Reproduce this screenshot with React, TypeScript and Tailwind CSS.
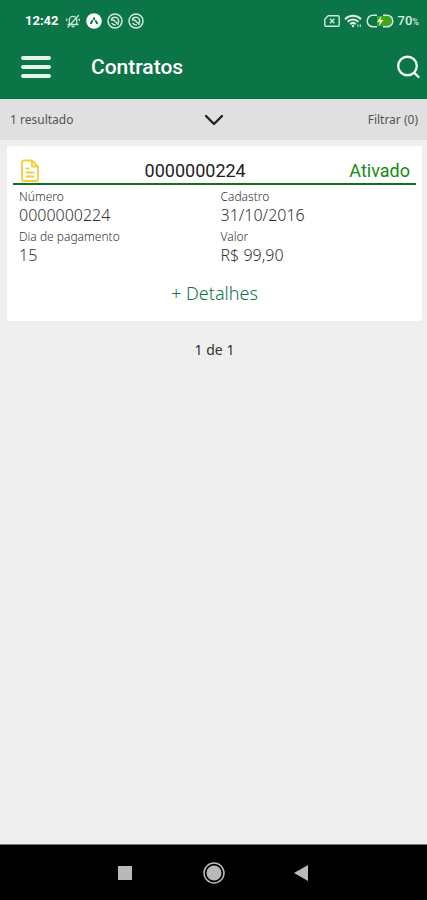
import React from 'react';

const fields = [
  { label: 'Número', value: '0000000224' },
  { label: 'Cadastro', value: '31/10/2016' },
  { label: 'Dia de pagamento', value: '15' },
  { label: 'Valor', value: 'R$ 99,90' },
];

function MutedBellIcon() {
  return (
    <svg className="w-4 h-4" viewBox="0 0 16 16" fill="none" stroke="#c9e6d6" strokeWidth="1.3" strokeLinecap="round">
      <path d="M3 11.5h10M4.3 11V7a3.7 3.7 0 0 1 7.4 0v4M7 13.5h2M3 14 13.5 2.500M2 6l-.5 1.500M14 6l.5 1.500" />
    </svg>
  );
}

function AppBadgeIcon() {
  return (
    <svg className="w-4 h-4" viewBox="0 0 16 16">
      <circle cx="8" cy="8" r="7.8" fill="#fff" />
      <path d="M8 5.200v1M6.200 8 5 10.300M9.800 8l1.200 2.300" fill="none" stroke="#0c7548" strokeWidth="2" strokeLinecap="round" />
    </svg>
  );
}

function SyncBadgeIcon() {
  return (
    <svg className="w-4 h-4" viewBox="0 0 16 16" fill="none" stroke="#cfe9db" strokeLinecap="round">
      <circle cx="8" cy="8" r="7" strokeWidth="1.5" />
      <path d="M4.500 6C6 3.800 9.500 3.600 11 5.800c1 1.400.8 3 .2 4.200M4.500 7l2.500.200 4 4M5 10.300c.8 1.200 2 1.700 3.300 1.700" strokeWidth="1.5" />
    </svg>
  );
}

function SimIcon() {
  return (
    <svg className="w-4 h-3" viewBox="0 0 16 12" fill="none" stroke="#cfe9db" strokeWidth="1.4">
      <path d="M4.2.8H14q1.200 0 1.200 1.200v8q0 1.200-1.200 1.200H2Q.8 11.200.8 10V4.200z" />
      <path d="m6 3.800 4.400 4.400M10.400 3.800 6 8.200" />
    </svg>
  );
}

function WifiIcon() {
  return (
    <svg className="w-[18px] h-[14px]" viewBox="0 0 18 14" fill="none" stroke="#d9efe3" strokeWidth="2">
      <path d="M1 5.200C5.500.700 12.500.700 17 5.200M3.600 7.800c3-3 7.800-3 10.800 0M6.200 10.200c1.600-1.500 4-1.500 5.600 0" />
      <circle cx="9" cy="12" r="1.200" fill="#d9efe3" stroke="none" />
      <path d="M14 10.500v2.500M16.300 10.500v2.500" strokeWidth="1" />
    </svg>
  );
}

function BatteryIcon() {
  return (
    <svg className="w-7 h-[14px]" viewBox="0 0 28 14">
      <path d="M11 2h10a5 5 0 0 1 0 10H11z" fill="#3fa51a" />
      <path d="M11 1.200H7a5.800 5.800 0 0 0 0 11.600h4M17 1.200h4a5.800 5.800 0 0 1 0 11.600h-4" fill="none" stroke="#cfe9db" strokeWidth="1.500" />
      <path d="M15.500 2 11 7.700h3L12.800 12l4.700-6h-3.100z" fill="#fff" />
    </svg>
  );
}

export default function App() {
  return (
    <div className="min-h-screen flex flex-col bg-[#eeeeee] font-['Noto_Sans',sans-serif] text-[#555555]">
      <header className="bg-[#0c7548] text-white font-[Roboto,sans-serif] border-b border-[#087044]">
        <div className="h-[42px] flex items-center pl-[25px] pr-2">
          <span className="text-[13px] font-bold">12:42</span>
          <div className="flex items-center gap-[5px] ml-[6px]">
            <MutedBellIcon />
            <AppBadgeIcon />
            <SyncBadgeIcon />
            <SyncBadgeIcon />
          </div>
          <div className="flex items-center gap-1 ml-auto">
            <SimIcon />
            <WifiIcon />
            <BatteryIcon />
            <span className="text-[13px] font-medium text-[#d9efe3]">70<small className="text-[9px]">%</small></span>
          </div>
        </div>
        <div className="h-14 flex items-start pl-5 pr-[5px]">
          <button type="button" aria-label="Menu" className="w-8 h-[50px] flex items-center justify-center">
            <svg className="w-8 h-6" viewBox="0 0 32 24" stroke="#e4f3eb" strokeWidth="4" strokeLinecap="round">
              <path d="M3 3h26M3 12h26M3 21h26" />
            </svg>
          </button>
          <h1 className="ml-[39px] text-[21px] leading-[50px] font-medium">Contratos</h1>
          <button type="button" aria-label="Buscar" className="ml-auto w-7 h-[50px] flex items-center justify-center">
            <svg className="w-7 h-7" viewBox="0 0 28 28" fill="none" stroke="#eef8f2" strokeWidth="2.400" strokeLinecap="round">
              <circle cx="13.500" cy="13" r="9.300" />
              <path d="m20.500 20 4 4" />
            </svg>
          </button>
        </div>
      </header>

      <div className="h-[41px] grid grid-cols-3 items-center pl-[10px] pr-[9px] bg-[#e0e0e0] text-xs">
        <span>1 resultado</span>
        <button type="button" aria-label="Expandir" className="justify-self-center">
          <svg className="w-5 h-3" viewBox="0 0 20 12" fill="none" stroke="#222" strokeWidth="2.400" strokeLinecap="round" strokeLinejoin="round">
            <path d="m2 2 8 8 8-8" />
          </svg>
        </button>
        <button type="button" className="justify-self-end">Filtrar (0)</button>
      </div>

      <main className="flex-1 pt-[6px] pl-[7px] pr-[5px]">
        <article className="bg-white rounded-xs px-[6px] pt-3 pb-4">
          <div className="h-[27px] flex items-center justify-between px-[6px] border-b-2 border-[#13701f] font-[Roboto,sans-serif] text-lg">
            <svg className="w-[22px] h-6" viewBox="0 0 22 24" fill="none" stroke="#f2cf3a" strokeWidth="1.800" strokeLinecap="round" strokeLinejoin="round">
              <path d="M5 1.500h8l6 6V20q0 2-2 2H5q-2 0-2-2V3.500q0-2 2-2zM13 1.500v6h6M7.500 9.500h2M7.500 13.500h7M7.500 17.500h7" />
            </svg>
            <h2 className="text-[#222222]">0000000224</h2>
            <span className="text-[#168a16]">Ativado</span>
          </div>
          <dl className="grid grid-cols-2 gap-x-3 gap-y-1 px-[6px] pt-1">
            {fields.map((f) => (
              <div key={f.label}>
                <dt className="text-xs leading-4 font-light text-[#333333]">{f.label}</dt>
                <dd className="text-base leading-5 font-light text-[#333333]">{f.value}</dd>
              </div>
            ))}
          </dl>
          <button type="button" className="block mx-auto mt-4 text-lg leading-6 font-light text-[#0c7548]">+ Detalhes</button>
        </article>
        <p className="mt-[18px] text-center text-sm leading-[22px] text-[#333333]">1 de 1</p>
      </main>

      <nav className="h-14 grid grid-cols-[1fr_auto_1fr] items-center gap-[66px] bg-black border-t border-[#777777]">
        <button type="button" aria-label="Recentes" className="justify-self-end">
          <svg className="w-6 h-6" viewBox="0 0 24 24"><path d="M6 5h14v14H6z" fill="#b9b9b9" /></svg>
        </button>
        <button type="button" aria-label="Início">
          <svg className="w-6 h-6" viewBox="0 0 24 24" fill="none">
            <circle cx="12" cy="12" r="10" stroke="#b9b9b9" strokeWidth="1.500" />
            <circle cx="12" cy="12" r="7.500" fill="#b9b9b9" />
          </svg>
        </button>
        <button type="button" aria-label="Voltar" className="justify-self-start">
          <svg className="w-6 h-6" viewBox="0 0 24 24"><path d="M2 12 16 4v16z" fill="#b9b9b9" /></svg>
        </button>
      </nav>
    </div>
  );
}
